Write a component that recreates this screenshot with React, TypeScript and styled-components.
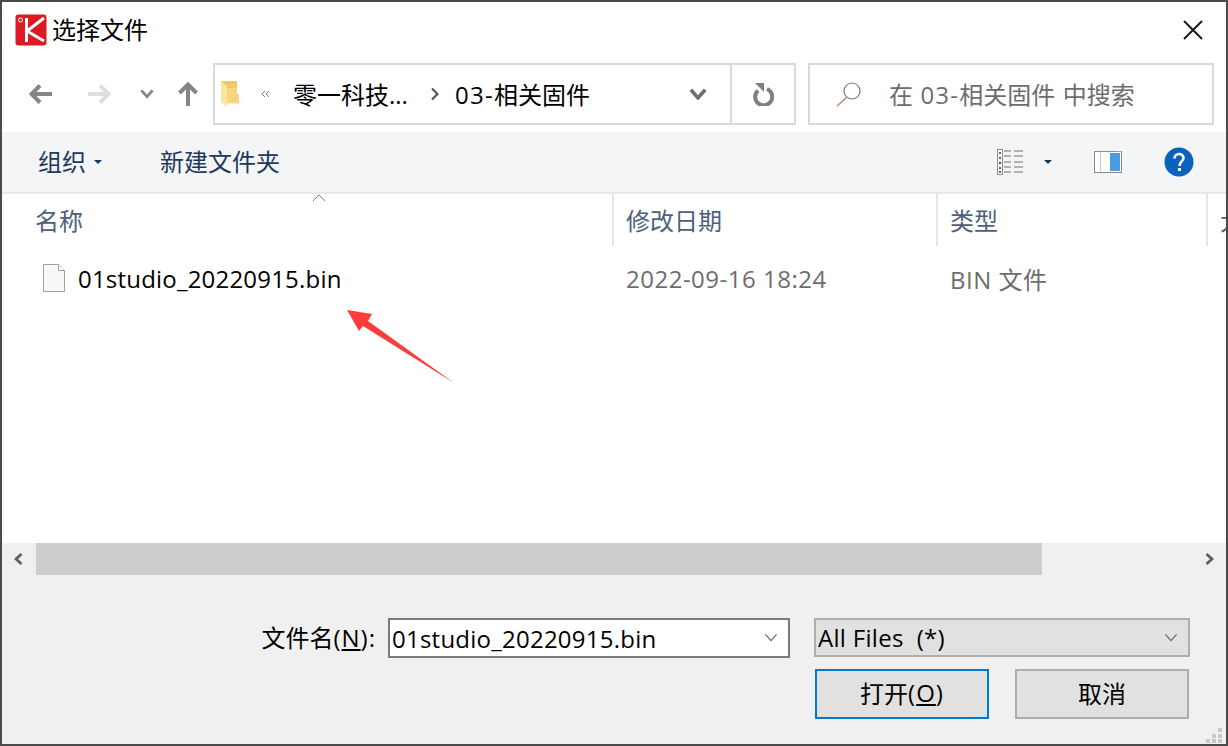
import styled, { createGlobalStyle } from "styled-components";

const uiFont = `"Open Sans", "Noto Sans CJK SC", sans-serif`;

const GlobalStyle = createGlobalStyle`
  html, body {
    margin: 0;
    padding: 0;
    background: #4a4a48;
    overflow: hidden;
  }
  * {
    box-sizing: border-box;
  }
`;

// Style >>>
const Dialog = styled.div`
  position: relative;
  width: 1224px;
  height: 742px;
  margin: 2px 0 0 2px;
  background: #fff;
  font-family: ${uiFont};
  font-size: 24px;
  color: #000;
  display: flex;
  flex-direction: column;
  overflow: hidden;
`;
const Latin = styled.span<{ $ls: number }>`
  letter-spacing: ${({ $ls }) => $ls}px;
`;
const TitleBar = styled.div`
  height: 61px;
  display: flex;
  align-items: center;
  padding: 0 23px 6px 13px;
`;
const Title = styled.div`
  flex: 1;
  margin-left: 5px;
  line-height: 32px;
`;
const NavBar = styled.div`
  height: 62px;
  display: flex;
  align-items: center;
`;
const NavButtons = styled.div`
  width: 211px;
  height: 100%;
  display: flex;
  align-items: center;
  padding-left: 27px;
`;
const NavIcon = styled.div<{ $w: number }>`
  width: ${({ $w }) => $w}px;
  display: flex;
  align-items: center;
`;
const AddressBox = styled.div`
  width: 583px;
  height: 62px;
  border: 2px solid #d9d9d9;
  display: flex;
  align-items: center;
`;
const Crumbs = styled.div`
  flex: 1;
  display: flex;
  align-items: center;
  padding-left: 6px;
`;
const CrumbChevrons = styled.div`
  margin-left: 20px;
  width: 32px;
  display: flex;
`;
const CrumbText = styled.span`
  white-space: nowrap;
  padding-bottom: 2px;
`;
const CrumbSep = styled.div`
  margin: 0 16px 0 23px;
  display: flex;
`;
const AddressDrop = styled.div`
  width: 50px;
  height: 100%;
  display: flex;
  align-items: center;
  padding-left: 9px;
`;
const RefreshBox = styled.div`
  width: 64px;
  height: 100%;
  border-left: 2px solid #d9d9d9;
  display: flex;
  align-items: center;
  justify-content: center;
`;
const SearchBox = styled.div`
  width: 406px;
  height: 62px;
  margin-left: 12px;
  border: 2px solid #d9d9d9;
  display: flex;
  align-items: center;
  padding-left: 26px;
  color: #6d6d6d;
`;
const SearchText = styled.span`
  margin-left: 27px;
  padding-bottom: 2px;
  white-space: nowrap;
`;
const Toolbar = styled.div`
  height: 62px;
  margin-top: 7px;
  background: #f4f5f7;
  border-bottom: 2px solid #e6e7e9;
  display: flex;
  align-items: center;
  padding: 0 32px 0 36px;
  color: #1e395b;
`;
const ToolLabel = styled.span`
  white-space: nowrap;
  padding-bottom: 4px;
`;
const ToolCaret = styled.div`
  margin-left: 8px;
  width: 0;
  height: 0;
  border-left: 4px solid transparent;
  border-right: 4px solid transparent;
  border-top: 4px solid #1e395b;
`;
const NewFolder = styled(ToolLabel)`
  margin-left: 58px;
  flex: 1;
`;
const ToolIcons = styled.div`
  display: flex;
  align-items: center;
`;
const ViewCaret = styled(ToolCaret)`
  margin: 0 42px 0 19px;
`;
const HelpWrap = styled.div`
  margin-left: 42px;
  display: flex;
`;
const FileArea = styled.div`
  position: relative;
  flex: 1;
  display: flex;
  flex-direction: column;
  overflow: hidden;
`;
const HeaderRow = styled.div`
  height: 52px;
  display: flex;
  flex-shrink: 0;
`;
const HeaderCell = styled.div<{ $w: number }>`
  width: ${({ $w }) => $w}px;
  flex-shrink: 0;
  padding: 9px 0 0 ${({ $w }) => ($w > 500 ? 33 : 12)}px;
  border-right: 2px solid #e5e5e5;
  color: #4c607a;
  line-height: 36px;
  white-space: nowrap;
  &:last-child {
    border-right: 0;
  }
`;
const SortArrow = styled.svg`
  position: absolute;
  left: 310px;
  top: 0;
`;
const FileRow = styled.div`
  height: 44px;
  margin-top: 10px;
  display: flex;
  align-items: center;
`;
const NameCell = styled.div`
  width: 624px;
  display: flex;
  align-items: center;
  padding-left: 41px;
`;
const FileName = styled.span`
  margin-left: 13px;
  letter-spacing: 0.2px;
  white-space: nowrap;
`;
const DateCell = styled.div`
  width: 324px;
  color: #6d6d6d;
  letter-spacing: 0.5px;
  white-space: nowrap;
`;
const TypeCell = styled.div`
  color: #6d6d6d;
  letter-spacing: 0.5px;
  white-space: nowrap;
`;
const RedArrow = styled.svg`
  position: absolute;
  left: 0;
  top: 0;
  pointer-events: none;
`;
const Footer = styled.div`
  background: #f0f0f0;
  height: 201px;
  flex-shrink: 0;
`;
const ScrollBar = styled.div`
  height: 32px;
  display: flex;
  align-items: center;
  justify-content: space-between;
  position: relative;
`;
const ScrollThumb = styled.div`
  position: absolute;
  left: 34px;
  top: 0;
  width: 1006px;
  height: 32px;
  background: #cdcdcd;
`;
const ScrollBtn = styled.div`
  width: 33px;
  display: flex;
  justify-content: center;
`;
const FormRow = styled.div`
  margin-top: 43px;
  display: flex;
  align-items: flex-start;
`;
const FileLabel = styled.div`
  width: 386px;
  height: 40px;
  padding-right: 12px;
  line-height: 40px;
  text-align: right;
  white-space: nowrap;
`;
const Combo = styled.div`
  width: 402px;
  height: 40px;
  border: 2px solid #7a7a7a;
  background: #fff;
  display: flex;
  align-items: center;
  justify-content: space-between;
  padding: 0 10px 0 2px;
`;
const TypeSelect = styled(Combo)`
  width: 376px;
  height: 39px;
  margin-left: 24px;
  border-color: #adadad;
  background: #e1e1e1;
`;
const ButtonRow = styled.div`
  margin-top: 11px;
  padding-left: 813px;
  display: flex;
  gap: 26px;
`;
const DialogButton = styled.div<{ $primary?: boolean }>`
  width: 174px;
  height: 50px;
  padding-bottom: 3px;
  background: #e1e1e1;
  border: 2px solid ${({ $primary }) => ($primary ? "#0078d7" : "#adadad")};
  display: flex;
  align-items: center;
  justify-content: center;
  white-space: nowrap;
`;
const Grip = styled.svg`
  position: absolute;
  right: 2px;
  bottom: 0;
`;
// Style <<<

const Logo = () => (
  <svg width="32" height="32" viewBox="0 0 32 32">
    <rect x="0.5" y="0.5" width="31" height="31" rx="3" fill="#db1a23" />
    <circle cx="5.5" cy="6" r="2" fill="none" stroke="#fff" strokeWidth="1" />
    <path d="M11.5 4v24M29 4 12 17l17 10" fill="none" stroke="#fff" strokeWidth="3" />
  </svg>
);

const CloseIcon = () => (
  <svg width="20" height="20" viewBox="0 0 20 20">
    <path d="M1 1 19 19M19 1 1 19" stroke="#1a1a1a" strokeWidth="2" fill="none" />
  </svg>
);

const ArrowIcon = ({ color, flip }: { color: string; flip?: boolean }) => (
  <svg width="24" height="20" viewBox="0 0 24 20" style={flip ? { transform: "scaleX(-1)" } : undefined}>
    <path d="M23 10H3M11 1.5 2.5 10l8.500 8.500" stroke={color} strokeWidth="4" fill="none" />
  </svg>
);

const UpIcon = () => (
  <svg width="20" height="24" viewBox="0 0 20 24">
    <path d="M10 24V3M1.500 11 10 2.500 18.500 11" stroke="#858585" strokeWidth="4" fill="none" />
  </svg>
);

const Chevron = ({ w, color, sw }: { w: number; color: string; sw: number }) => (
  <svg width={w} height={w * 0.7} viewBox="0 0 20 14">
    <path d="M2 2 10 11 18 2" stroke={color} strokeWidth={sw} fill="none" />
  </svg>
);

const FolderIcon = () => (
  <svg width="20" height="28" viewBox="0 0 20 28">
    <path d="M0 1h16v22H6z" fill="#eec867" />
    <path d="M16 14h2v9h-2z" fill="#f3d67d" />
    <path d="M6 8h10v15H6z" fill="#f5d67f" />
    <path d="M6 23h14v1H6z" fill="#f8ecc4" />
    <path d="M0 1 6 6v21L0 22z" fill="#fbe6a0" />
  </svg>
);

const DoubleChevron = () => (
  <svg width="9" height="8" viewBox="0 0 9 8">
    <path d="M4 1 1 4l3 3M8 1 5 4l3 3" stroke="#808080" strokeWidth="1" fill="none" />
  </svg>
);

const CrumbArrow = () => (
  <svg width="8" height="14" viewBox="0 0 8 14">
    <path d="M1 1.500 6.500 7 1 12.500" stroke="#555" strokeWidth="2.200" fill="none" />
  </svg>
);

const RefreshIcon = () => (
  <svg width="22" height="24" viewBox="0 0 22 24">
    <path d="M6 8.500A8.500 8.500 0 1 0 15 7" stroke="#808080" strokeWidth="4" fill="none" />
    <path d="M3 1h9v9z" fill="#808080" />
  </svg>
);

const SearchIcon = () => (
  <svg width="26" height="26" viewBox="0 0 26 26">
    <circle cx="16" cy="10" r="8" fill="none" stroke="#7a7a7a" strokeWidth="1.200" />
    <path d="M11 16 1 25" stroke="#b98a5e" strokeWidth="1.400" fill="none" />
  </svg>
);

const ViewIcon = () => (
  <svg width="28" height="26" viewBox="0 0 28 26">
    <rect x="0.500" y="0.500" width="5" height="25" fill="#fff" stroke="#8d8d8d" />
    <path d="M2 3h2v2H2zM2 8h2v2H2zM2 18h2v2H2zM2 22h2v2H2z" fill="#5a6a7a" />
    <path d="M2 13h2v2H2z" fill="#b02020" />
    <path d="M7 2h7M7 7h7M7 13h7M7 18h7M7 23h7M17 2h9M17 7h9M17 13h9M17 18h9M17 23h9" stroke="#6f6f6f" strokeWidth="1" />
  </svg>
);

const PaneIcon = () => (
  <svg width="28" height="22" viewBox="0 0 28 22">
    <rect x="0.500" y="0.500" width="27" height="21" fill="#fff" stroke="#8b8b8b" />
    <rect x="16" y="2" width="10" height="18" fill="#4a9ce2" />
    <path d="M6.500 1v20" stroke="#c9c9c9" />
    <path d="M22 1h1M24 1h1M26 1h1" stroke="#e4e4e4" />
  </svg>
);

const HelpIcon = () => (
  <svg width="30" height="30" viewBox="0 0 30 30">
    <circle cx="15" cy="15" r="14.500" fill="#0a62bd" />
    <path d="M10.500 11.500c0-6 9-6 9-.5 0 3.500-4 3.500-4 8" stroke="#fff" strokeWidth="2.600" fill="none" />
    <rect x="14" y="21" width="3" height="3" fill="#fff" />
  </svg>
);

const PageIcon = () => (
  <svg width="22" height="28" viewBox="0 0 22 28">
    <path d="M0.500 0.500h15l6 6v21h-21z" fill="#f7f8f9" stroke="#a0a0a0" />
    <path d="M15.500 0.500v6h6" fill="#fff" stroke="#a0a0a0" />
  </svg>
);

const ScrollChevron = ({ flip }: { flip?: boolean }) => (
  <svg width="9" height="12" viewBox="0 0 9 12" style={flip ? { transform: "scaleX(-1)" } : undefined}>
    <path d="M7.500 1 2 6l5.500 5" stroke="#606060" strokeWidth="2.800" fill="none" />
  </svg>
);

const App = () => {
  return (
    <>
      <GlobalStyle />
      <Dialog>
        <TitleBar>
          <Logo />
          <Title>选择文件</Title>
          <CloseIcon />
        </TitleBar>
        <NavBar>
          <NavButtons>
            <NavIcon $w={58}>
              <ArrowIcon color="#858585" />
            </NavIcon>
            <NavIcon $w={53}>
              <ArrowIcon color="#dedede" flip />
            </NavIcon>
            <NavIcon $w={38}>
              <Chevron w={14} color="#858585" sw={4} />
            </NavIcon>
            <NavIcon $w={20}>
              <UpIcon />
            </NavIcon>
          </NavButtons>
          <AddressBox>
            <Crumbs>
              <FolderIcon />
              <CrumbChevrons>
                <DoubleChevron />
              </CrumbChevrons>
              <CrumbText>零一科技...</CrumbText>
              <CrumbSep>
                <CrumbArrow />
              </CrumbSep>
              <CrumbText>
                <Latin $ls={1.3}>03-</Latin>相关固件
              </CrumbText>
            </Crumbs>
            <AddressDrop>
              <Chevron w={18} color="#6f6f6f" sw={4} />
            </AddressDrop>
            <RefreshBox>
              <RefreshIcon />
            </RefreshBox>
          </AddressBox>
          <SearchBox>
            <SearchIcon />
            <SearchText>
              在<Latin $ls={1.2}> 03-</Latin>相关固件<Latin $ls={1.2}> </Latin>中搜索
            </SearchText>
          </SearchBox>
        </NavBar>
        <Toolbar>
          <ToolLabel>组织</ToolLabel>
          <ToolCaret />
          <NewFolder>新建文件夹</NewFolder>
          <ToolIcons>
            <ViewIcon />
            <ViewCaret />
            <PaneIcon />
            <HelpWrap>
              <HelpIcon />
            </HelpWrap>
          </ToolIcons>
        </Toolbar>
        <FileArea>
          <HeaderRow>
            <HeaderCell $w={612}>名称</HeaderCell>
            <HeaderCell $w={324}>修改日期</HeaderCell>
            <HeaderCell $w={270}>类型</HeaderCell>
            <HeaderCell $w={60}>大小</HeaderCell>
          </HeaderRow>
          <SortArrow width="14" height="8" viewBox="0 0 14 8">
            <path d="M1 7 7 1l6 6" stroke="#7a7a7a" strokeWidth="1" fill="none" />
          </SortArrow>
          <FileRow>
            <NameCell>
              <PageIcon />
              <FileName>01studio_20220915.bin</FileName>
            </NameCell>
            <DateCell>2022-09-16 18:24</DateCell>
            <TypeCell>BIN 文件</TypeCell>
          </FileRow>
          <RedArrow width="1224" height="350" viewBox="2 194 1224 350">
            <path d="M347 310 372 314 368 321 454 383 363 326 359 331z" fill="#fe3c3c" />
          </RedArrow>
        </FileArea>
        <Footer>
          <ScrollBar>
            <ScrollThumb />
            <ScrollBtn>
              <ScrollChevron />
            </ScrollBtn>
            <ScrollBtn>
              <ScrollChevron flip />
            </ScrollBtn>
          </ScrollBar>
          <FormRow>
            <FileLabel>
              文件名
              <Latin $ls={1}>
                (<u>N</u>):
              </Latin>
            </FileLabel>
            <Combo>
              <Latin $ls={0.24}>01studio_20220915.bin</Latin>
              <Chevron w={14} color="#606060" sw={1.500} />
            </Combo>
            <TypeSelect>
              <Latin $ls={0.3}>All Files&nbsp;&nbsp;(*)</Latin>
              <Chevron w={14} color="#606060" sw={1.500} />
            </TypeSelect>
          </FormRow>
          <ButtonRow>
            <DialogButton $primary>
              打开
              <Latin $ls={1}>
                (<u>O</u>)
              </Latin>
            </DialogButton>
            <DialogButton>取消</DialogButton>
          </ButtonRow>
          <Grip width="18" height="18" viewBox="0 0 18 18">
            <path d="M12 2h4v4h-4zM6 8h4v4H6zM12 8h4v4h-4zM0 13h4v4H0zM6 13h4v4H6zM12 13h4v4h-4z" fill="#c8c8c8" />
          </Grip>
        </Footer>
      </Dialog>
    </>
  );
};

export default App;
